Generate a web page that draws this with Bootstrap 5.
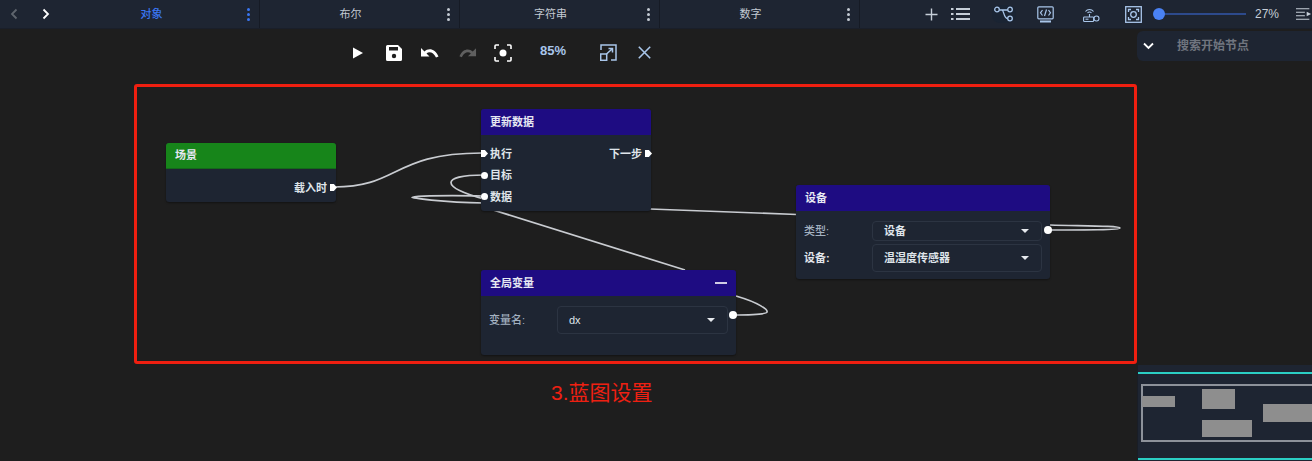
<!DOCTYPE html>
<html lang="zh">
<head>
  <meta charset="UTF-8" />
  <title>蓝图设置</title>
  <meta name="viewport" content="width=device-width, initial-scale=1.0" />
  <link href="https://cdn.jsdelivr.net/npm/bootstrap@5.3.0/dist/css/bootstrap.min.css" rel="stylesheet" />
  <style>
    html, body { height: 461px; overflow: hidden; }
    body { background: #1e1e1e; font-family: "Liberation Sans", "Noto Sans CJK SC", sans-serif; font-size: 11px; color: #d5dbe3; }
    svg { display: block; flex: none; }
    .top-bar { height: 29px; background: #1e2532; border-bottom: 1px solid #1a1f2a; }
    .arrow-box { width: 62px; padding-left: 9px; gap: 22px; flex: none; }
    .type-tab { width: 200px; height: 28px; flex: none; border-right: 1px solid #161b25; font-size: 11px; color: #c3cad3; position: relative; }
    .type-tab.first-tab { width: 198px; color: #3a76f2; font-weight: 500; }
    .tab-label { padding-right: 18px; }
    .tab-dots { position: absolute; right: 9px; top: 8px; width: 3px; height: 13px; color: #c3cad3; }
    .first-tab .tab-dots { color: #3a76f2; }
    .tool-group { padding-left: 65px; min-width: 0; }
    .share-pill { margin-left: 22px; background: #1a2433; border-radius: 8px; padding: 1px 2px; }
    .slider-wrap { margin-left: 11px; width: 93px; height: 12px; position: relative; flex: none; }
    .slider-line { height: 2px; background: #2d4a8c; margin-left: 8px; width: 85px; position: absolute; top: 5px; }
    .slider-knob { width: 12px; height: 12px; border-radius: 50%; background: #4a82f4; position: absolute; left: 0; top: 0; }
    .zoom-txt { font-size: 12px; margin-left: 9px; width: 25px; flex: none; color: #c6ced8; }
    .main-area { height: 432px; }
    .canvas-col { width: 1137px; }
    .canvas-tools { height: 55px; padding-top: 1px; padding-bottom: 9px; padding-left: 350px; }
    .zoom-pct { font-size: 13px; font-weight: 700; color: #a9c6ea; width: 70px; text-align: center; position: relative; top: -2px; margin-left: 6px; }
    .red-frame { margin-left: 134px; width: 1003px; height: 280px; border: 3px solid #f01f10; border-radius: 3px; position: relative; }
    .wire-layer { position: absolute; left: -3px; top: -3px; overflow: visible; }
    .frame-caption { margin: 14px 0 0 551px; font-size: 21px; line-height: 30px; color: #ee2012; }
    .bp-node { position: absolute; background: #1e2532; border: 0; border-radius: 3px; box-shadow: 0 1px 2px rgba(0,0,0,.4); font-weight: 700; color: #dfe4ea; --bs-card-bg: #1e2532; }
    .bp-head { height: 26px; padding: 0 9px; border-radius: 3px 3px 0 0; background: #1e0c82; color: #e6e8f2; }
    .bp-head.green-head { background: #17851a; border-bottom: 1px solid #14691a; }
    .node-scene { left: 29px; top: 56px; width: 170px; height: 59px; }
    .node-update { left: 344px; top: 22px; width: 170px; height: 102px; }
    .node-device { left: 659px; top: 98px; width: 254px; height: 94px; }
    .node-var { left: 344px; top: 183px; width: 255px; height: 85px; }
    .pin-row { height: 21.5px; padding: 0 9px; position: relative; }
    .pin-dot { position: absolute; width: 7px; height: 7px; border-radius: 50%; background: #fff; top: 7px; }
    .pin-exec { border-radius: 0; clip-path: polygon(0 0, 55% 0, 100% 50%, 55% 100%, 0 100%); }
    .pin-left { left: 0; }
    .pin-right { right: -1px; }
    .pin-out { position: absolute; width: 8px; height: 8px; background: #fff; border-radius: 50%; left: 248px; top: 41px; }
    .node-body { padding: 10px 8px 0; }
    .sel-box { border: 1px solid #2c3442; border-radius: 4px; padding: 0 12px 0 11px; font-weight: 700; }
    .sel-caret { width: 0; height: 0; border-left: 4px solid transparent; border-right: 4px solid transparent; border-top: 4px solid #e6e9ee; }
    .field-name { width: 68px; color: #e0e4ea; }
    .field-name.dim-name { color: #a3b1c0; font-weight: 500; }
    .field-gap { margin-bottom: 3px; }
    .side-col { width: 175px; }
    .search-bar { height: 30px; margin-top: 2px; background: #1e2532; border-radius: 6px 0 0 6px; padding-left: 6px; font-weight: 700; color: #70757f; }
    .search-bar span { margin-left: 23px; font-size: 12px; }
    .mini-map { height: 96px; background: #1e2532; position: relative; border-left: 1px solid #191d26; }
    .mini-line { position: absolute; left: 0; right: 0; height: 2px; background: #2bcfc5; }
    .mini-frame { position: absolute; left: 3px; right: -10px; top: 19px; height: 58px; border: 2px solid #8d929a; border-right: 0; filter: blur(.6px); }
    .mini-block { position: absolute; background: #8e8e8e; }
    .dev-sel-a { height: 20px; }
    .dev-sel-b { height: 28px; }
    .var-sel { height: 28px; }
  </style>
</head>
<body>
<div class="top-bar d-flex align-items-center">
  <div class="arrow-box d-flex align-items-center">
    <svg width="10" height="12" viewBox="0 0 10 12"><path d="M7.5 1.5 3 6l4.500 4.500" fill="none" stroke="#5f656e" stroke-width="1.800"/></svg>
    <svg width="10" height="12" viewBox="0 0 10 12"><path d="M2.500 1.500 7 6l-4.500 4.500" fill="none" stroke="#fff" stroke-width="1.800"/></svg>
  </div>
  <div class="type-tab first-tab d-flex align-items-center justify-content-center"><span class="tab-label">对象</span><svg class="tab-dots" viewBox="0 0 3 13"><g fill="currentColor"><circle cx="1.500" cy="1.500" r="1.500"/><circle cx="1.500" cy="6.500" r="1.500"/><circle cx="1.500" cy="11.500" r="1.500"/></g></svg></div>
  <div class="type-tab d-flex align-items-center justify-content-center"><span class="tab-label">布尔</span><svg class="tab-dots" viewBox="0 0 3 13"><g fill="currentColor"><circle cx="1.500" cy="1.500" r="1.500"/><circle cx="1.500" cy="6.500" r="1.500"/><circle cx="1.500" cy="11.500" r="1.500"/></g></svg></div>
  <div class="type-tab d-flex align-items-center justify-content-center"><span class="tab-label">字符串</span><svg class="tab-dots" viewBox="0 0 3 13"><g fill="currentColor"><circle cx="1.500" cy="1.500" r="1.500"/><circle cx="1.500" cy="6.500" r="1.500"/><circle cx="1.500" cy="11.500" r="1.500"/></g></svg></div>
  <div class="type-tab d-flex align-items-center justify-content-center"><span class="tab-label">数字</span><svg class="tab-dots" viewBox="0 0 3 13"><g fill="currentColor"><circle cx="1.500" cy="1.500" r="1.500"/><circle cx="1.500" cy="6.500" r="1.500"/><circle cx="1.500" cy="11.500" r="1.500"/></g></svg></div>
  <div class="tool-group d-flex align-items-center flex-grow-1">
    <svg width="13" height="13" viewBox="0 0 13 13" fill="none" stroke="#c6ced8" stroke-width="1.400"><path d="M6.500 .5v12M.5 6.500h12"/></svg>
    <svg style="margin-left:13px" width="19" height="14" viewBox="0 0 19 14" fill="none" stroke="#c6ced8" stroke-width="2"><path d="M5 2h14M5 7h14M5 12h14M0 2h2.500M0 7h2.500M0 12h2.500"/></svg>
    <div class="share-pill"><svg width="20" height="16" viewBox="0 0 20 16" fill="none" stroke="#a9c6ea" stroke-width="1.300"><circle cx="3" cy="3.500" r="2.300"/><circle cx="16" cy="3.500" r="2.300"/><circle cx="16" cy="12.500" r="2.300"/><path d="M5.500 4h8M8 4c2 0 1.500 8 5.500 8.500"/></svg></div>
    <svg style="margin-left:21px" width="17" height="17" viewBox="0 0 17 17" fill="none" stroke="#a9c6ea" stroke-width="1.200"><rect x=".8" y=".8" width="15.400" height="12" rx="1"/><path d="M5.500 4 3.500 6.800 5.500 9.500M11.500 4l2 2.800-2 2.700M9.500 3.500l-2 6.500"/><path d="M3 15.500h11" stroke-width="2"/></svg>
    <svg style="margin-left:29px" width="17" height="17" viewBox="0 0 17 17" fill="none" stroke="#a9c6ea" stroke-width="1.100"><path d="M2.500 5.500a5 5 0 0 1 8 0M4.500 7a2.600 2.600 0 0 1 4 0M6.500 8v3"/><rect x=".6" y="11" width="10" height="4.500" rx=".8"/><circle cx="13.500" cy="12.500" r="2.500"/><path d="M2.500 13.200h3"/></svg>
    <svg style="margin-left:25px" width="17" height="17" viewBox="0 0 17 17" fill="none" stroke="#a9c6ea" stroke-width="1.300"><rect x=".7" y=".7" width="15.600" height="15.600"/><circle cx="8.500" cy="8.500" r="2.800"/><path d="M3.500 6V3.500H6M11 3.500h2.500V6M13.500 11v2.500H11M6 13.500H3.500V11"/></svg>
    <div class="slider-wrap"><div class="slider-line"></div><div class="slider-knob"></div></div>
    <div class="zoom-txt">27%</div>
    <svg style="margin-left:16px" width="16" height="14" viewBox="0 0 18 14" fill="none" stroke="#c6ced8" stroke-width="1.200"><path d="M0 1h15M0 5h10M0 9h10M0 13h15"/><path d="M12 4.500l5 2.500-5 2.500z" fill="#c6ced8" stroke="none"/></svg>
  </div>
</div>

<div class="main-area d-flex">
  <div class="canvas-col">
    <div class="canvas-tools d-flex align-items-center">
      <svg width="16" height="16" viewBox="0 0 16 16"><path d="M3 2.500 13 8 3 13.500z" fill="#fff"/></svg>
      <svg style="margin-left:20px" width="16" height="16" viewBox="0 0 16 16"><path d="M1.500 0H12l4 4v10.500a1.500 1.500 0 0 1-1.500 1.500h-13A1.500 1.500 0 0 1 0 14.500v-13A1.500 1.500 0 0 1 1.500 0z" fill="#fff"/><rect x="3" y="2" width="9" height="3.500" fill="#1e1e1e"/><circle cx="8" cy="11" r="2.200" fill="#1e1e1e"/></svg>
      <svg style="margin-left:18px" width="20" height="12" viewBox="0 0 20 12"><path d="M4.500 4.500C8 1 15 1 18.500 9.500L16 10.500C13.500 5 9 4 6.500 6.500L9.500 9.500H1V1z" fill="#fff"/></svg>
      <svg style="margin-left:18px" width="19" height="12" viewBox="0 0 20 12"><path d="M15.500 4.500C12 1 5 1 1.500 9.500L4 10.500C6.500 5 11 4 13.500 6.500L10.500 9.500H19V1z" fill="#5f5f5f"/></svg>
      <svg style="margin-left:17px" width="18" height="18" viewBox="0 0 18 18" fill="none" stroke="#fff" stroke-width="1.600"><path d="M1 5V2a1 1 0 0 1 1-1h3M13 1h3a1 1 0 0 1 1 1v3M17 13v3a1 1 0 0 1-1 1h-3M5 17H2a1 1 0 0 1-1-1v-3"/><circle cx="9" cy="9" r="3.500" fill="#fff" stroke="none"/></svg>
      <div class="zoom-pct">85%</div>
      <svg style="margin-left:12px" width="17" height="17" viewBox="0 0 17 17" fill="none" stroke="#a9c6ea" stroke-width="1.500"><path d="M1 6V1h15v15h-5"/><rect x=".7" y="10" width="6" height="6.300"/><path d="M6.500 10 12 5M8.500 4.500H12.500V8.500"/></svg>
      <svg style="margin-left:21px" width="13" height="13" viewBox="0 0 13 13" fill="none" stroke="#a9c6ea" stroke-width="1.600"><path d="M.8.800l11.400 11.400M12.200.800.800 12.200"/></svg>
    </div>

    <div class="red-frame">
      <svg class="wire-layer" width="1003" height="280" viewBox="0 0 1003 280" fill="none" stroke="#c9ccd1" stroke-width="1.700">
        <g transform="translate(-134 -84)">
          <path d="M334 187C400 187 392 153 482 153"/>
          <path d="M484 175C440 175 440 187 484 199"/>
          <path d="M484 196C420 195 412 197 412 197.500C412 198 440 202 484 203"/>
          <path d="M650 209 797 214.500"/>
          <path d="M490 209 685 270"/>
          <path d="M736 296C760 303 768 310 767 312C766 315 745 315 733 315"/>
          <path d="M1048 230C1085 230 1120 230 1120 228C1120 226 1085 226 1050 225"/>
        </g>
      </svg>

      <div class="card bp-node node-scene">
        <div class="bp-head green-head d-flex align-items-center">场景</div>
        <div class="pin-row d-flex align-items-center justify-content-end mt-2">载入时<i class="pin-dot pin-exec pin-right"></i></div>
      </div>

      <div class="card bp-node node-update">
        <div class="bp-head d-flex align-items-center">更新数据</div>
        <div class="pt-2">
          <div class="pin-row d-flex align-items-center justify-content-between"><span>执行</span><span>下一步</span><i class="pin-dot pin-exec pin-left"></i><i class="pin-dot pin-exec pin-right"></i></div>
          <div class="pin-row d-flex align-items-center"><span>目标</span><i class="pin-dot pin-left"></i></div>
          <div class="pin-row d-flex align-items-center"><span>数据</span><i class="pin-dot pin-left"></i></div>
        </div>
      </div>

      <div class="card bp-node node-device">
        <div class="bp-head d-flex align-items-center">设备</div>
        <div class="node-body">
          <div class="d-flex align-items-center field-gap"><span class="field-name dim-name">类型:</span><div class="sel-box flex-grow-1 d-flex align-items-center justify-content-between dev-sel-a">设备<i class="sel-caret"></i></div></div>
          <div class="d-flex align-items-center"><span class="field-name">设备:</span><div class="sel-box flex-grow-1 d-flex align-items-center justify-content-between dev-sel-b">温湿度传感器<i class="sel-caret"></i></div></div>
        </div>
        <i class="pin-out"></i>
      </div>

      <div class="card bp-node node-var">
        <div class="bp-head d-flex align-items-center justify-content-between">全局变量<svg width="12" height="2" viewBox="0 0 12 2"><path d="M0 1h12" stroke="#fff" stroke-width="1.600"/></svg></div>
        <div class="node-body">
          <div class="d-flex align-items-center"><span class="field-name dim-name">变量名:</span><div class="sel-box flex-grow-1 d-flex align-items-center justify-content-between var-sel"><span class="fw-normal">dx</span><i class="sel-caret"></i></div></div>
        </div>
        <i class="pin-out"></i>
      </div>
    </div>

    <div class="frame-caption">3.蓝图设置</div>
  </div>

  <div class="side-col d-flex flex-column justify-content-between">
    <div class="search-bar d-flex align-items-center">
      <svg width="11" height="8" viewBox="0 0 11 8"><path d="M1 1.500 5.500 6 10 1.500" fill="none" stroke="#fff" stroke-width="1.800"/></svg>
      <span>搜索开始节点</span>
    </div>
    <div class="mini-map overflow-hidden">
      <div class="mini-line" style="top:7px"></div>
      <div class="mini-frame"></div>
      <div class="mini-block" style="left:4px;top:31px;width:33px;height:11px"></div>
      <div class="mini-block" style="left:64px;top:24px;width:33px;height:20px"></div>
      <div class="mini-block" style="left:125px;top:39px;width:50px;height:18px"></div>
      <div class="mini-block" style="left:64px;top:55px;width:50px;height:17px"></div>
      <div class="mini-line" style="top:93px"></div>
    </div>
  </div>
</div>
</body>
</html>
